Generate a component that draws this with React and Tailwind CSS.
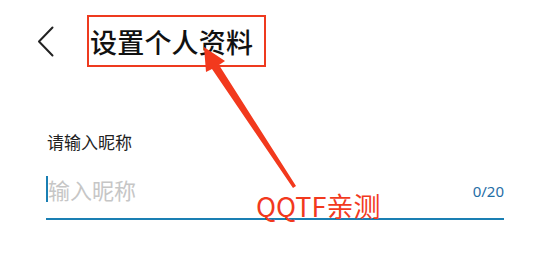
import React, { useState } from 'react';

const cjk = '"Noto Sans CJK SC", "Noto Sans", sans-serif';

export default function App() {
  const [nickname, setNickname] = useState('');

  return (
    <div className="relative w-[550px] h-[275px] bg-white overflow-hidden" style={{ fontFamily: cjk }}>
      {/* header */}
      <div className="flex items-center pt-[15px] pl-[37px]">
        <svg width="17" height="31" viewBox="0 0 17 31" fill="none" className="shrink-0">
          <path d="M15.5 1.5L2 15.5l13.5 14" stroke="#222" strokeWidth="2" strokeLinecap="round" strokeLinejoin="round" />
        </svg>
        <div className="ml-[33px] w-[179px] h-[52px] border-2 border-[#ee3a1f] flex items-center pl-[1px]">
          <h1 className="text-[27px] leading-none font-medium text-[#111] tracking-[0.2px]">设置个人资料</h1>
        </div>
      </div>

      {/* form */}
      <div className="px-[46px] mt-[63px]">
        <label className="block text-[17px] leading-[24px] text-[#222] pl-[1px]">请输入昵称</label>
        <div className="mt-[20px] flex items-center border-b-2 border-[#1a7fb3] h-[30px] box-content pb-[14px]">
          <span className="w-[2px] h-[26px] bg-[#1a7fb3] shrink-0" />
          <input
            value={nickname}
            onChange={(e) => setNickname(e.target.value)}
            placeholder="输入昵称"
            className="flex-1 min-w-0 text-[22px] leading-none bg-transparent outline-none placeholder:text-[#c6c6c6] text-[#222]"
            style={{ fontFamily: cjk }}
          />
          <span className="text-[15px] leading-none text-[#1f6ea6] mt-[4px]" style={{ fontFamily: '"Noto Sans", sans-serif' }}>
            {nickname.length}/20
          </span>
        </div>
      </div>

      {/* annotation overlay */}
      <svg className="absolute inset-0 pointer-events-none" width="550" height="275" viewBox="0 0 550 275">
        <polygon points="204,47 225,61 219,65 296,186 293,188 212,69 206,72" fill="#f2391d" />
      </svg>
      <span className="absolute left-[256px] top-[189px] text-[27px] leading-[34px] text-[#f2391d]" style={{ fontFamily: cjk }}>
        QQTF亲测
      </span>
    </div>
  );
}
